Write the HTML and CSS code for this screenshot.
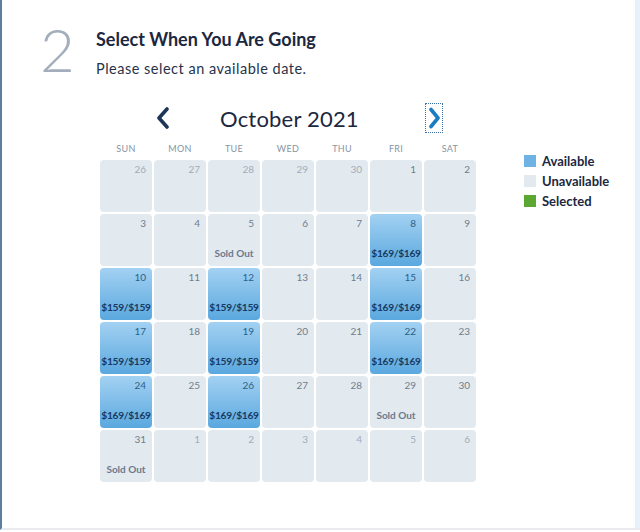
FILE: index.html
```html
<!DOCTYPE html>
<html>
<head>
<meta charset="utf-8">
<link rel="stylesheet" href="styles.css">
</head>
<body>
<div class="page">
  <div class="main">
    <header class="step">
      <div class="step-num">2</div>
      <div class="step-text">
        <h1 class="step-title">Select When You Are Going</h1>
        <p class="step-sub">Please select an available date.</p>
      </div>
    </header>
    <section class="cal-wrap">
      <div class="calendar">
        <div class="cal-nav">
          <span class="nav-btn prev"><svg width="14" height="22" viewBox="0 0 14 22"><path d="M11 2 L3 11 L11 20" fill="none" stroke="#1d3557" stroke-width="3.6" stroke-linecap="round" stroke-linejoin="round"/></svg></span>
          <span class="month">October 2021</span>
          <span class="nav-btn next"><svg width="12" height="22" viewBox="0 0 12 22"><path d="M3 2.5 L10 11 L3 19.5" fill="none" stroke="#1b7cc1" stroke-width="3.6" stroke-linecap="round" stroke-linejoin="round"/></svg></span>
        </div>
        <div class="weekdays">
          <span>SUN</span><span>MON</span><span>TUE</span><span>WED</span><span>THU</span><span>FRI</span><span>SAT</span>
        </div>
        <div class="grid">
          <div class="cell muted"><span class="d">26</span></div>
          <div class="cell muted"><span class="d">27</span></div>
          <div class="cell muted"><span class="d">28</span></div>
          <div class="cell muted"><span class="d">29</span></div>
          <div class="cell muted"><span class="d">30</span></div>
          <div class="cell"><span class="d">1</span></div>
          <div class="cell"><span class="d">2</span></div>

          <div class="cell"><span class="d">3</span></div>
          <div class="cell"><span class="d">4</span></div>
          <div class="cell"><span class="d">5</span><span class="sold">Sold Out</span></div>
          <div class="cell"><span class="d">6</span></div>
          <div class="cell"><span class="d">7</span></div>
          <div class="cell avail"><span class="d">8</span><span class="price">$169/$169</span></div>
          <div class="cell"><span class="d">9</span></div>

          <div class="cell avail"><span class="d">10</span><span class="price">$159/$159</span></div>
          <div class="cell"><span class="d">11</span></div>
          <div class="cell avail"><span class="d">12</span><span class="price">$159/$159</span></div>
          <div class="cell"><span class="d">13</span></div>
          <div class="cell"><span class="d">14</span></div>
          <div class="cell avail"><span class="d">15</span><span class="price">$169/$169</span></div>
          <div class="cell"><span class="d">16</span></div>

          <div class="cell avail"><span class="d">17</span><span class="price">$159/$159</span></div>
          <div class="cell"><span class="d">18</span></div>
          <div class="cell avail"><span class="d">19</span><span class="price">$159/$159</span></div>
          <div class="cell"><span class="d">20</span></div>
          <div class="cell"><span class="d">21</span></div>
          <div class="cell avail"><span class="d">22</span><span class="price">$169/$169</span></div>
          <div class="cell"><span class="d">23</span></div>

          <div class="cell avail"><span class="d">24</span><span class="price">$169/$169</span></div>
          <div class="cell"><span class="d">25</span></div>
          <div class="cell avail"><span class="d">26</span><span class="price">$169/$169</span></div>
          <div class="cell"><span class="d">27</span></div>
          <div class="cell"><span class="d">28</span></div>
          <div class="cell"><span class="d">29</span><span class="sold">Sold Out</span></div>
          <div class="cell"><span class="d">30</span></div>

          <div class="cell"><span class="d">31</span><span class="sold">Sold Out</span></div>
          <div class="cell muted"><span class="d">1</span></div>
          <div class="cell muted"><span class="d">2</span></div>
          <div class="cell muted"><span class="d">3</span></div>
          <div class="cell muted"><span class="d">4</span></div>
          <div class="cell muted"><span class="d">5</span></div>
          <div class="cell muted"><span class="d">6</span></div>
        </div>
      </div>
      <ul class="legend">
        <li><span class="sw sw-avail"></span>Available</li>
        <li><span class="sw sw-unavail"></span>Unavailable</li>
        <li><span class="sw sw-sel"></span>Selected</li>
      </ul>
    </section>
  </div>
  <div class="rail"></div>
</div>
</body>
</html>
```

FILE: styles.css
```css
* { box-sizing: border-box; }
html, body { margin: 0; padding: 0; }
body {
  width: 640px;
  height: 532px;
  overflow: hidden;
  background: #ffffff;
  font-family: Lato, "Open Sans", sans-serif;
  color: #1d2b44;
}
.page {
  display: flex;
  height: 530px;
  border-left: 2px solid #5b7f9c;
  border-bottom: 2px solid #e9ebee;
}
.main {
  flex: 1;
  display: flex;
  flex-direction: column;
}
.rail {
  width: 5px;
  background: #e7f1fb;
}
.step {
  display: flex;
  padding: 19px 0 0 38px;
}
.step-num {
  font-size: 60px;
  line-height: 60px;
  font-weight: 300;
  color: #a3adbb;
  width: 56px;
}
.step-text { padding-top: 9px; }
.step-title {
  margin: 0;
  font-size: 18px;
  line-height: 22px;
  font-weight: 700;
  color: #1c2740;
}
.step-sub {
  margin: 10px 0 0;
  font-size: 14.5px;
  line-height: 18px;
  letter-spacing: 0.5px;
  color: #27324a;
}
.cal-wrap {
  display: flex;
  padding-left: 98px;
  margin-top: 24px;
}
.calendar { width: 378px; }
.cal-nav {
  display: flex;
  align-items: center;
  height: 30px;
}
.nav-btn { display: flex; align-items: center; }
.prev { margin-left: 56px; }
.month {
  margin-left: 50px;
  font-size: 22px;
  font-weight: 400;
  color: #1c2740;
  letter-spacing: 0.2px;
}
.next {
  margin-left: 68px;
  outline: 1px dotted #3a6fa0;
  outline-offset: 1px;
  padding: 2px 1px;
}
.weekdays {
  display: grid;
  grid-template-columns: repeat(7, 52px);
  column-gap: 2px;
  margin-top: 7px;
  height: 18px;
}
.weekdays span {
  text-align: center;
  font-size: 9px;
  line-height: 18px;
  color: #8794a3;
  letter-spacing: 0.3px;
}
.grid {
  display: grid;
  grid-template-columns: repeat(7, 52px);
  grid-auto-rows: 52px;
  gap: 2px;
  margin-top: 2px;
}
.cell {
  background: #e2e9ef;
  border-radius: 4px;
  display: flex;
  flex-direction: column;
  align-items: stretch;
  padding: 3px 6px 6px 0;
}
.cell .d {
  text-align: right;
  font-size: 10px;
  line-height: 12px;
  color: #6f7d8c;
}
.cell.muted .d { color: #a2adb9; }
.cell .sold, .cell .price {
  margin-top: auto;
  text-align: center;
  font-weight: 700;
  line-height: 13px;
}
.cell .sold {
  font-size: 10px;
  color: #6a7a8e;
  padding-left: 6px;
}
.cell.avail {
  background: linear-gradient(#a3d1f2, #5aa8df);
}
.cell.avail .d { color: #2e5f86; }
.cell .price {
  font-size: 10.2px;
  color: #173a63;
  margin-right: -6px;
  letter-spacing: -0.3px;
  white-space: nowrap;
}
.legend {
  list-style: none;
  margin: 48px 0 0 46px;
  padding: 0;
}
.legend li {
  display: flex;
  align-items: center;
  height: 20px;
  font-size: 13px;
  font-weight: 700;
  color: #1c2740;
}
.sw {
  width: 12px;
  height: 12px;
  margin-right: 6px;
}
.sw-avail { background: #6fb2e4; }
.sw-unavail { background: #e2e9ef; }
.sw-sel { background: #5aa832; }
```
